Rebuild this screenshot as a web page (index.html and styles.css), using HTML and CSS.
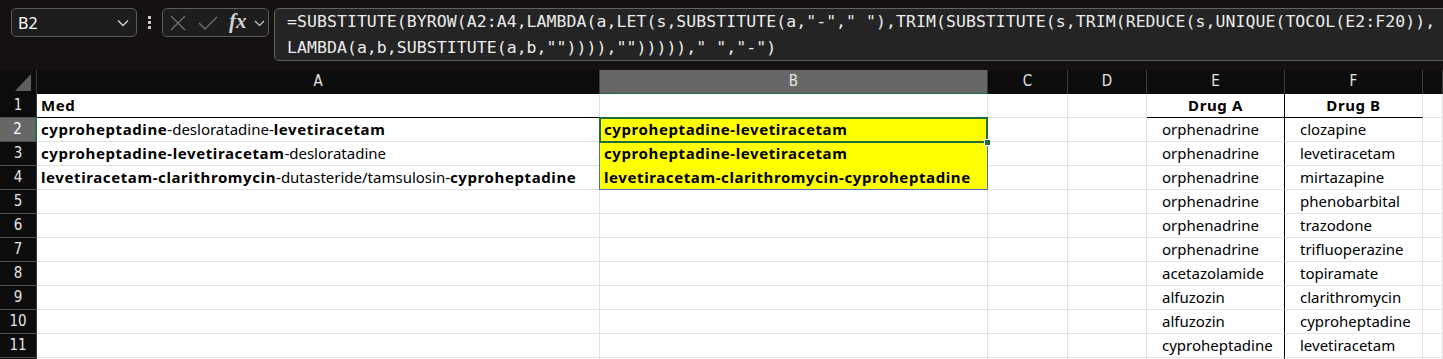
FILE: index.html
```html
<!DOCTYPE html>
<html lang="en">
<head>
  <meta charset="UTF-8">
  <title>Book1 - Excel</title>
  <link rel="stylesheet" href="styles.css">
</head>
<body>
  <!-- name box + formula bar -->
  <div class="toolbar">
    <div class="namebox">
      <span>B2</span>
      <svg width="12" height="8" viewBox="0 0 12 8"><polyline points="1,1.5 6,6.5 11,1.5" fill="none" stroke="#d4d4d4" stroke-width="1.3"/></svg>
    </div>
    <div class="kebab"><i></i><i></i><i></i></div>
    <div class="fxbox">
      <svg class="ico-x" width="16" height="16" viewBox="0 0 16 16"><path d="M1 1 L15 15 M15 1 L1 15" stroke="#6f6f6f" stroke-width="1.4"/></svg>
      <svg class="ico-ok" width="20" height="16" viewBox="0 0 20 16"><polyline points="1,8 7,14 19,2" fill="none" stroke="#6f6f6f" stroke-width="1.4"/></svg>
      <span class="fx">fx</span>
      <svg class="ico-dd" width="11" height="8" viewBox="0 0 11 8"><polyline points="1,2 5.5,6.5 10,2" fill="none" stroke="#c8c8c8" stroke-width="1.2"/></svg>
    </div>
    <div class="formula">=SUBSTITUTE(BYROW(A2:A4,LAMBDA(a,LET(s,SUBSTITUTE(a,"-"," "),TRIM(SUBSTITUTE(s,TRIM(REDUCE(s,UNIQUE(TOCOL(E2:F20)),
LAMBDA(a,b,SUBSTITUTE(a,b,"")))),"")))))," ","-")</div>
  </div>

  <div class="sheet">
    <div class="row head">
      <div class="corner"><svg width="16" height="17" viewBox="0 0 16 17"><polygon points="16,0 16,17 0,17" fill="#5e5e5e"/></svg></div>
      <div class="ch">A</div>
      <div class="ch sel-h">B</div>
      <div class="ch">C</div>
      <div class="ch">D</div>
      <div class="ch">E</div>
      <div class="ch">F</div>
      <div class="ch"></div>
    </div>

    <div class="row">
      <div class="rh">1</div>
      <div class="c b bb">Med</div>
      <div class="c"></div>
      <div class="c"></div>
      <div class="c"></div>
      <div class="c b ctr bb br">Drug A</div>
      <div class="c b ctr bb">Drug B</div>
      <div class="c"></div>
    </div>

    <div class="row">
      <div class="rh sel-r">2</div>
      <div class="c"><b>cyproheptadine</b>-desloratadine-<b>levetiracetam</b></div>
      <div class="c b y cur">cyproheptadine-levetiracetam
        <div class="spill"></div>
        <div class="selbox"><span class="handle"></span></div>
      </div>
      <div class="c"></div>
      <div class="c"></div>
      <div class="c ind br">orphenadrine</div>
      <div class="c ind">clozapine</div>
      <div class="c"></div>
    </div>

    <div class="row">
      <div class="rh">3</div>
      <div class="c"><b>cyproheptadine-levetiracetam</b>-desloratadine</div>
      <div class="c b y">cyproheptadine-levetiracetam</div>
      <div class="c"></div>
      <div class="c"></div>
      <div class="c ind br">orphenadrine</div>
      <div class="c ind">levetiracetam</div>
      <div class="c"></div>
    </div>

    <div class="row">
      <div class="rh">4</div>
      <div class="c"><b>levetiracetam-clarithromycin</b>-dutasteride/tamsulosin-<b>cyproheptadine</b></div>
      <div class="c b y">levetiracetam-clarithromycin-cyproheptadine</div>
      <div class="c"></div>
      <div class="c"></div>
      <div class="c ind br">orphenadrine</div>
      <div class="c ind">mirtazapine</div>
      <div class="c"></div>
    </div>

    <div class="row">
      <div class="rh">5</div>
      <div class="c"></div>
      <div class="c"></div>
      <div class="c"></div>
      <div class="c"></div>
      <div class="c ind br">orphenadrine</div>
      <div class="c ind">phenobarbital</div>
      <div class="c"></div>
    </div>

    <div class="row">
      <div class="rh">6</div>
      <div class="c"></div>
      <div class="c"></div>
      <div class="c"></div>
      <div class="c"></div>
      <div class="c ind br">orphenadrine</div>
      <div class="c ind">trazodone</div>
      <div class="c"></div>
    </div>

    <div class="row">
      <div class="rh">7</div>
      <div class="c"></div>
      <div class="c"></div>
      <div class="c"></div>
      <div class="c"></div>
      <div class="c ind br">orphenadrine</div>
      <div class="c ind">trifluoperazine</div>
      <div class="c"></div>
    </div>

    <div class="row">
      <div class="rh">8</div>
      <div class="c"></div>
      <div class="c"></div>
      <div class="c"></div>
      <div class="c"></div>
      <div class="c ind br">acetazolamide</div>
      <div class="c ind">topiramate</div>
      <div class="c"></div>
    </div>

    <div class="row">
      <div class="rh">9</div>
      <div class="c"></div>
      <div class="c"></div>
      <div class="c"></div>
      <div class="c"></div>
      <div class="c ind br">alfuzozin</div>
      <div class="c ind">clarithromycin</div>
      <div class="c"></div>
    </div>

    <div class="row">
      <div class="rh">10</div>
      <div class="c"></div>
      <div class="c"></div>
      <div class="c"></div>
      <div class="c"></div>
      <div class="c ind br">alfuzozin</div>
      <div class="c ind">cyproheptadine</div>
      <div class="c"></div>
    </div>

    <div class="row">
      <div class="rh">11</div>
      <div class="c"></div>
      <div class="c"></div>
      <div class="c"></div>
      <div class="c"></div>
      <div class="c ind br">cyproheptadine</div>
      <div class="c ind">levetiracetam</div>
      <div class="c"></div>
    </div>

    <!-- next row, only its top edge shows -->
    <div class="row">
      <div class="rh"></div>
      <div class="c"></div>
      <div class="c"></div>
      <div class="c"></div>
      <div class="c"></div>
      <div class="c br"></div>
      <div class="c"></div>
      <div class="c"></div>
    </div>
  </div>
</body>
</html>
```

FILE: styles.css
```css
   body {
     margin: 0;
     background-color: #151110;
     font-family: "Noto Sans", sans-serif;
     overflow: hidden;
   }

   /* top bar */
   .toolbar {
     height: 70px;
     box-sizing: border-box;
     padding: 8px 0 0 11px;
     display: flex;
     align-items: flex-start;
     overflow: hidden;
   }
   .namebox {
     width: 126px;
     height: 29px;
     box-sizing: border-box;
     border: 1px solid #5b5b5b;
     border-radius: 5px;
     background-color: #1d1d1d;
     display: flex;
     align-items: center;
     justify-content: space-between;
     padding: 0 7px 0 6px;
     color: #ffffff;
     font-size: 16px;
   }
   .kebab {
     height: 29px;
     margin: 0 11px;
     display: flex;
     flex-direction: column;
     justify-content: center;
     gap: 2px;
   }
   .kebab i {
     display: block;
     width: 3px;
     height: 3px;
     background-color: #c8c8c8;
   }
   .fxbox {
     width: 107px;
     height: 29px;
     box-sizing: border-box;
     border: 1px solid #5b5b5b;
     border-radius: 5px;
     background-color: #1d1d1d;
     display: flex;
     align-items: center;
     padding-left: 7px;
   }
   .ico-ok { margin-left: 12px; }
   .fx {
     width: 20px;
     margin-left: 11px;
     font-family: "Liberation Serif", serif;
     font-style: italic;
     font-weight: bold;
     font-size: 21px;
     color: #d2d2d2;
     line-height: 1;
     margin-top: -3px;
   }
   .ico-dd { margin-left: 5px; }
   .formula {
     flex: 1;
     margin-left: 5px;
     margin-right: -10px;
     height: 53px;
     box-sizing: border-box;
     border: 1px solid #626262;
     border-radius: 5px;
     background-color: #242424;
     padding: 0 0 0 12px;
     color: #ececec;
     font-family: "DejaVu Sans Mono", monospace;
     font-size: 16.5px;
     letter-spacing: 0.05px;
     line-height: 26px;
     white-space: pre;
     overflow: hidden;
   }

   /* grid */
   .row {
     display: grid;
     grid-template-columns: 37px 563px 388px 80px 79px 138px 138px 1fr;
     height: 24px;
   }
   .head .ch,
   .corner,
   .rh {
     background-color: #0c0c0c;
     color: #e4e4e4;
     font-family: "DejaVu Sans", sans-serif;
     font-stretch: condensed;
     font-size: 15px;
     text-align: center;
     line-height: 23px;
     box-sizing: border-box;
     border-right: 1px solid #3c3c3c;
     border-bottom: 1px solid #3c3c3c;
   }
   .corner {
     display: flex;
     align-items: flex-end;
     justify-content: flex-end;
     padding: 0 5px 3px 0;
   }
   .rh {
     border-bottom-color: #4e4e4e;
   }
   .sel-h {
     background-color: #676767 !important;
     color: #ffffff;
     border-bottom: 2px solid #217346 !important;
   }
   .sel-r {
     background-color: #676767 !important;
     color: #ffffff;
     border-right: 2px solid #217346 !important;
   }

   .c {
     position: relative;
     background-color: #ffffff;
     box-sizing: border-box;
     border-right: 1px solid #e1e1e1;
     border-bottom: 1px solid #e1e1e1;
     padding: 0 4px;
     font-size: 15px;
     line-height: 23px;
     color: #000;
     white-space: nowrap;
   }
   .b,
   .c b {
     font-weight: bold;
     letter-spacing: 0.6px;
   }
   .ctr { text-align: center; }
   .ind { padding-left: 15px; }
   .bb { border-bottom: 1px solid #000; }
   .br { border-right: 1px solid #000; }
   .y {
     background-color: #ffff00;
     border-bottom-color: #ffff00;
   }

   /* active cell and spill range */
   .cur { z-index: 2; }
   .spill {
     position: absolute;
     left: -1px;
     top: -1px;
     width: 389px;
     height: 73px;
     border: 1px solid #4a72c8;
     box-sizing: border-box;
   }
   .selbox {
     position: absolute;
     left: -1px;
     top: -1px;
     width: 389px;
     height: 26px;
     border: 2px solid #1e6b40;
     box-sizing: border-box;
   }
   .handle {
     position: absolute;
     right: -5px;
     bottom: -5px;
     width: 5px;
     height: 5px;
     background-color: #1e6b40;
     border: 1px solid #ffffff;
   }
```
